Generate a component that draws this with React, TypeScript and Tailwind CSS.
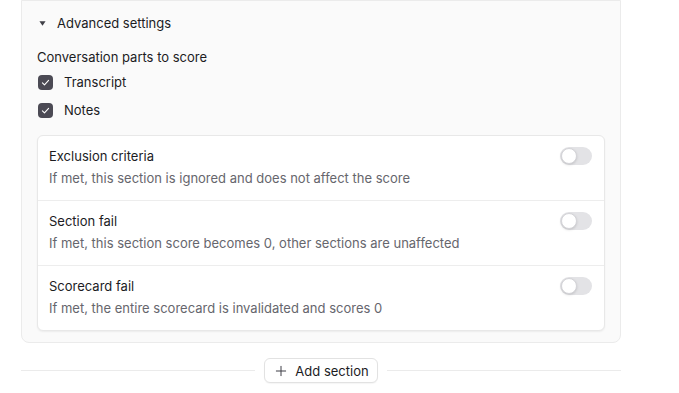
import { Plus } from "lucide-react";

const rules = [
  {
    title: "Exclusion criteria",
    description: "If met, this section is ignored and does not affect the score",
  },
  {
    title: "Section fail",
    description: "If met, this section score becomes 0, other sections are unaffected",
  },
  {
    title: "Scorecard fail",
    description: "If met, the entire scorecard is invalidated and scores 0",
  },
];

const Checkbox = ({ label }: { label: string }) => (
  <label className="flex h-7 items-center gap-[11px]">
    <span className="flex h-[15px] w-[15px] items-center justify-center rounded-[4px] bg-[#4b4a54]">
      <svg viewBox="0 0 16 16" className="h-[11px] w-[11px]" fill="none">
        <path
          d="M3.5 8.5l3 3 6-6.5"
          stroke="white"
          strokeWidth="1.6"
          strokeLinecap="round"
          strokeLinejoin="round"
        />
      </svg>
    </span>
    <span className="text-[#1c1c1f]">{label}</span>
  </label>
);

const Toggle = () => (
  <div className="relative h-[18px] w-[32px] shrink-0 rounded-full bg-[#e3e3e6]">
    <span className="absolute left-[1px] top-[1px] h-4 w-4 rounded-full border border-[#d4d4d8] bg-white shadow-sm" />
  </div>
);

export default function App() {
  return (
    <div
      className="h-[393px] w-[679px] bg-white pl-[21px] text-[13px] leading-5"
      style={{ fontFamily: "Inter, 'Noto Sans', sans-serif" }}
    >
      {/* Advanced settings panel */}
      <div className="w-[600px] rounded-b-lg border border-[#ebebeb] bg-[#fafafa] px-[15px] pb-[11px] pt-3">
        <div className="flex items-center gap-[11px] pl-[2px]">
          <svg viewBox="0 0 8 8" className="h-[7px] w-[7px] text-[#3f3f46]">
            <path d="M0.5 1.5h7L4 6.5z" fill="currentColor" />
          </svg>
          <span className="text-[#1c1c1f]">Advanced settings</span>
        </div>

        <div className="mt-[14px] text-[#1c1c1f]">Conversation parts to score</div>
        <div className="mt-[1px] flex flex-col pl-[1px]">
          <Checkbox label="Transcript" />
          <Checkbox label="Notes" />
        </div>

        <div className="mt-[11px] overflow-hidden rounded-md border border-[#e8e8e8] bg-white shadow-[0_1px_2px_rgba(0,0,0,0.06)]">
          {rules.map((rule, i) => (
            <div
              key={rule.title}
              className={`flex items-start justify-between pb-3 pl-[11px] pr-3 pt-[10px] ${
                i > 0 ? "border-t border-[#ededed]" : ""
              }`}
            >
              <div className="flex flex-col gap-[2px]">
                <span className="text-[#1c1c1f]">{rule.title}</span>
                <span className="text-[#66666d]">{rule.description}</span>
              </div>
              <div className="pt-[1px]">
                <Toggle />
              </div>
            </div>
          ))}
        </div>
      </div>

      {/* Add section divider */}
      <div className="mt-[15px] flex w-[600px] items-center gap-[9px]">
        <div className="h-px flex-1 bg-[#ebebeb]" />
        <button className="flex h-[25px] items-center gap-[6px] rounded-md border border-[#e2e2e2] bg-white px-2 text-[#1c1c1f] shadow-[0_1px_1px_rgba(0,0,0,0.04)]">
          <Plus className="h-4 w-4 text-[#3f3f46]" strokeWidth={1.5} />
          Add section
        </button>
        <div className="h-px flex-1 bg-[#ebebeb]" />
      </div>
    </div>
  );
}
